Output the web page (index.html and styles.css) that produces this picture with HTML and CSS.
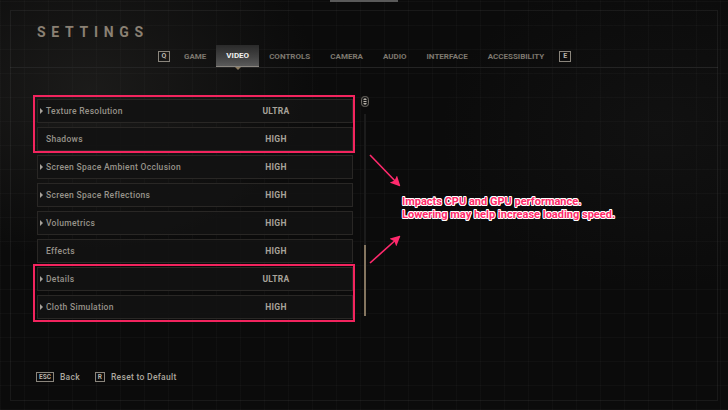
FILE: index.html
```html
<!DOCTYPE html>
<html>
<head>
<meta charset="utf-8">
<link rel="stylesheet" href="styles.css">
</head>
<body>
<div class="screen">
  <div class="frame"></div>
  <div class="topbar"></div>
  <h1 class="title">SETTINGS</h1>
  <nav class="tabs">
    <span class="key">Q</span>
    <span class="tab">GAME</span>
    <span class="tab active">VIDEO</span>
    <span class="tab">CONTROLS</span>
    <span class="tab">CAMERA</span>
    <span class="tab">AUDIO</span>
    <span class="tab">INTERFACE</span>
    <span class="tab">ACCESSIBILITY</span>
    <span class="key key-e">E</span>
  </nav>
  <div class="tabline"></div>
  <main class="content">
    <div class="list">
      <div class="row"><span class="label"><i class="tri"></i>Texture Resolution</span><span class="value">ULTRA</span></div>
      <div class="row"><span class="label">Shadows</span><span class="value">HIGH</span></div>
      <div class="row"><span class="label"><i class="tri"></i>Screen Space Ambient Occlusion</span><span class="value">HIGH</span></div>
      <div class="row"><span class="label"><i class="tri"></i>Screen Space Reflections</span><span class="value">HIGH</span></div>
      <div class="row"><span class="label"><i class="tri"></i>Volumetrics</span><span class="value">HIGH</span></div>
      <div class="row"><span class="label">Effects</span><span class="value">HIGH</span></div>
      <div class="row"><span class="label"><i class="tri"></i>Details</span><span class="value">ULTRA</span></div>
      <div class="row"><span class="label"><i class="tri"></i>Cloth Simulation</span><span class="value">HIGH</span></div>
    </div>
    <div class="scroll">
      <svg class="scroll-icon" width="8" height="11" viewBox="0 0 8 11">
        <rect x="0.5" y="0.5" width="7" height="10" rx="3" fill="#1a1a1a" stroke="#6e6a63"/>
        <path d="M4 2 L6 4 H2 Z M4 9 L6 7 H2 Z" fill="#b8b3aa"/>
        <rect x="2.5" y="5" width="3" height="1" fill="#b8b3aa"/>
      </svg>
      <div class="track"><div class="track-fill"></div></div>
    </div>
  </main>
  <footer class="footer">
    <span class="key key-sm">ESC</span><span class="hint">Back</span>
    <span class="key key-sm key-r">R</span><span class="hint">Reset to Default</span>
  </footer>

  <div class="hl hl-top"></div>
  <div class="hl hl-bottom"></div>
  <svg class="arrows" width="728" height="410" viewBox="0 0 728 410">
    <defs>
      <marker id="head" viewBox="0 0 10 10" refX="8" refY="5" markerWidth="6.5" markerHeight="6.5" orient="auto">
        <path d="M0 0 L10 5 L0 10 L2 5 Z" fill="#ff2a6d"/>
      </marker>
    </defs>
    <line x1="370" y1="155" x2="399" y2="185" stroke="#ff2a6d" stroke-width="1.6" marker-end="url(#head)"/>
    <line x1="370" y1="263" x2="399" y2="237" stroke="#ff2a6d" stroke-width="1.6" marker-end="url(#head)"/>
  </svg>
  <p class="note">Impacts CPU and GPU performance.<br>Lowering may help increase loading speed.</p>
</div>
</body>
</html>
```
FILE: styles.css
```css
html, body {
  margin: 0;
  padding: 0;
  background: #0a0a0a;
}
.screen {
  position: relative;
  width: 728px;
  height: 410px;
  overflow: hidden;
  font-family: Roboto, "Liberation Sans", sans-serif;
  background:
    radial-gradient(ellipse 230px 170px at 90px 90px, rgba(70,68,64,0.28), rgba(0,0,0,0) 100%),
    radial-gradient(ellipse 220px 160px at 660px 130px, rgba(60,60,60,0.12), rgba(0,0,0,0) 100%),
    repeating-linear-gradient(90deg, rgba(255,255,255,0.022) 0 1px, rgba(0,0,0,0) 1px 24px),
    repeating-linear-gradient(0deg, rgba(255,255,255,0.022) 0 1px, rgba(0,0,0,0) 1px 24px),
    #0b0b0b;
}
.frame {
  position: absolute;
  left: 10px;
  top: 10px;
  right: 10px;
  bottom: 9px;
  border: 1px solid rgba(255,255,255,0.06);
  pointer-events: none;
}
.topbar {
  width: 68px;
  height: 2px;
  margin-left: 330px;
  background: #5a5a5a;
}
.title {
  margin: 24px 0 0 37px;
  height: 12px;
  font-size: 14px;
  line-height: 12px;
  font-weight: 700;
  letter-spacing: 5.7px;
  color: #8a8073;
}
.tabs {
  display: flex;
  align-items: center;
  height: 22px;
  margin: 7px 0 0 158px;
}
.key {
  display: flex;
  align-items: center;
  justify-content: center;
  box-sizing: border-box;
  width: 12px;
  height: 11px;
  border: 1px solid #8a857c;
  color: #b8b3aa;
  font-size: 7px;
  font-weight: 700;
  margin-right: 4px;
}
.key-e {
  margin-left: 5px;
  margin-right: 0;
}
.tab {
  display: flex;
  align-items: center;
  height: 22px;
  padding: 0 10px;
  font-size: 8px;
  font-weight: 700;
  color: #7d786f;
  letter-spacing: 0;
}
.tab.active {
  position: relative;
  color: #f0f0f0;
  background: linear-gradient(180deg, #2a2a2a 0%, #444 60%, #5a5a5a 100%);
  border-bottom: 1px solid #8a8680;
  box-sizing: border-box;
}
.tab.active::after {
  content: "";
  position: absolute;
  left: 50%;
  bottom: -4px;
  margin-left: -3px;
  border-left: 3px solid transparent;
  border-right: 3px solid transparent;
  border-top: 3px solid #8a7a60;
}
.tabline {
  height: 1px;
  margin: 0 10px;
  background: #242424;
}
.content {
  display: flex;
  margin: 31px 0 0 37px;
}
.list {
  display: flex;
  flex-direction: column;
  gap: 4px;
  width: 316px;
}
.row {
  display: flex;
  align-items: center;
  box-sizing: border-box;
  height: 24px;
  border: 1px solid #292725;
  background: rgba(18,18,18,0.92);
}
.label {
  display: flex;
  align-items: center;
  width: 238px;
  padding-left: 8px;
  box-sizing: border-box;
  font-size: 8.5px;
  font-weight: 500;
  color: #97928a;
  letter-spacing: 0.3px;
  position: relative;
}
.tri {
  position: absolute;
  left: 2px;
  top: 50%;
  margin-top: -3px;
  width: 0;
  height: 0;
  border-top: 3px solid transparent;
  border-bottom: 3px solid transparent;
  border-left: 3px solid #a7a29a;
}
.value {
  width: 0;
  display: flex;
  justify-content: center;
  font-size: 8.5px;
  font-weight: 700;
  color: #a8a39a;
  letter-spacing: 0.3px;
  white-space: nowrap;
}
.scroll {
  display: flex;
  flex-direction: column;
  align-items: center;
  width: 8px;
  margin-left: 8px;
  margin-top: -3px;
}
.scroll-icon {
  display: block;
}
.track {
  position: relative;
  width: 2px;
  height: 202px;
  margin-top: 7px;
  background: #1c1c1c;
}
.track-fill {
  position: absolute;
  left: 0;
  bottom: 0;
  width: 2px;
  height: 71px;
  background: #857660;
}
.footer {
  display: flex;
  align-items: center;
  margin: 53px 0 0 36px;
}
.key-sm {
  width: auto;
  height: 10px;
  padding: 0 2px;
  font-size: 6.5px;
  font-weight: 700;
  margin-right: 6px;
}
.key-r {
  width: 10px;
  padding: 0;
  margin-left: 15px;
}
.hint {
  font-size: 8.5px;
  font-weight: 500;
  color: #aca79e;
  letter-spacing: 0.3px;
}
.hl {
  position: absolute;
  left: 33px;
  width: 318px;
  height: 54px;
  border: 2px solid #f2245e;
}
.hl-top { top: 95px; }
.hl-bottom { top: 264px; }
.arrows {
  position: absolute;
  left: 0;
  top: 0;
  pointer-events: none;
}
.note {
  position: absolute;
  left: 402px;
  top: 195px;
  margin: 0;
  font-size: 11px;
  line-height: 13px;
  font-weight: 700;
  color: #ff2a6a;
  text-shadow:
    0.8px 0 0 #fff, -0.8px 0 0 #fff, 0 0.8px 0 #fff, 0 -0.8px 0 #fff,
    0.6px 0.6px 0 #fff, -0.6px -0.6px 0 #fff, 0.6px -0.6px 0 #fff, -0.6px 0.6px 0 #fff;
}
```
